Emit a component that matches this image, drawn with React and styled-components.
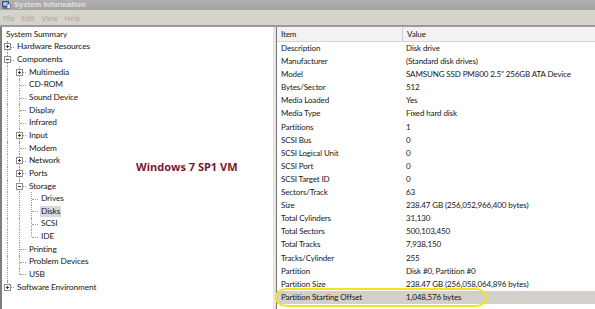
import React from 'react';
import styled, { createGlobalStyle } from 'styled-components';

const GlobalStyle = createGlobalStyle`
  html, body {
    margin: 0;
    padding: 0;
    background: #ffffff;
    overflow: hidden;
  }
  body {
    font-family: Lato, "Open Sans", "DejaVu Sans", sans-serif;
  }
`;

const tree = [
  { label: 'System Summary', depth: -1 },
  { label: 'Hardware Resources', depth: 0, box: '+' },
  { label: 'Components', depth: 0, box: '-' },
  { label: 'Multimedia', depth: 1, box: '+' },
  { label: 'CD-ROM', depth: 1 },
  { label: 'Sound Device', depth: 1 },
  { label: 'Display', depth: 1 },
  { label: 'Infrared', depth: 1 },
  { label: 'Input', depth: 1, box: '+' },
  { label: 'Modem', depth: 1 },
  { label: 'Network', depth: 1, box: '+' },
  { label: 'Ports', depth: 1, box: '+' },
  { label: 'Storage', depth: 1, box: '-' },
  { label: 'Drives', depth: 2 },
  { label: 'Disks', depth: 2, selected: true },
  { label: 'SCSI', depth: 2 },
  { label: 'IDE', depth: 2 },
  { label: 'Printing', depth: 1 },
  { label: 'Problem Devices', depth: 1 },
  { label: 'USB', depth: 1 },
  { label: 'Software Environment', depth: 0, box: '+' },
];

const details = [
  ['Description', 'Disk drive'],
  ['Manufacturer', '(Standard disk drives)'],
  ['Model', 'SAMSUNG SSD PM800 2.5" 256GB ATA Device'],
  ['Bytes/Sector', '512'],
  ['Media Loaded', 'Yes'],
  ['Media Type', 'Fixed hard disk'],
  ['Partitions', '1'],
  ['SCSI Bus', '0'],
  ['SCSI Logical Unit', '0'],
  ['SCSI Port', '0'],
  ['SCSI Target ID', '0'],
  ['Sectors/Track', '63'],
  ['Size', '238.47 GB (256,052,966,400 bytes)'],
  ['Total Cylinders', '31,130'],
  ['Total Sectors', '500,103,450'],
  ['Total Tracks', '7,938,150'],
  ['Tracks/Cylinder', '255'],
  ['Partition', 'Disk #0, Partition #0'],
  ['Partition Size', '238.47 GB (256,058,064,896 bytes)'],
  ['Partition Starting Offset', '1,048,576 bytes'],
];

// true when a later row sits at the same depth before the tree climbs above it
const hasNextSibling = (i) => {
  const d = tree[i].depth;
  for (let j = i + 1; j < tree.length; j++) {
    if (tree[j].depth < d) return false;
    if (tree[j].depth === d) return true;
  }
  return false;
};

const ancestorAt = (i, level) => {
  for (let j = i - 1; j >= 0; j--) {
    if (tree[j].depth === level) return j;
  }
  return -1;
};

const Window = styled.div`
  width: 595px;
  height: 309px;
  display: flex;
  flex-direction: column;
  background: #d4d0c8;
  overflow: hidden;
`;

const TitleBar = styled.div`
  height: 10px;
  flex-shrink: 0;
  display: flex;
  align-items: center;
  gap: 3px;
  padding-left: 2px;
  background: linear-gradient(#b0b0b0, #a4a4a4);
`;

const TitleText = styled.span`
  font-family: "Liberation Sans", Arial, sans-serif;
  font-weight: bold;
  font-size: 7.4px;
  color: #e0e0e0;
  letter-spacing: 0.15px;
  line-height: 10px;
`;

const MenuBar = styled.div`
  height: 15px;
  flex-shrink: 0;
  display: flex;
  align-items: center;
  gap: 7px;
  padding-left: 3px;
  background: #d6d3cc;
`;

const MenuItem = styled.span`
  font-family: "Open Sans", sans-serif;
  font-size: 7.3px;
  color: #a6a49f;
`;

const Client = styled.div`
  flex: 1;
  display: flex;
  border-top: 2px solid #9c9a96;
  min-height: 0;
`;

const TreePane = styled.div`
  width: 271px;
  flex-shrink: 0;
  background: #ffffff;
  border-left: 2px solid #7e7e7e;
  position: relative;
  padding-top: 1px;
  font-size: 8.3px;
  letter-spacing: -0.1px;
  color: #161616;
`;

const TreeRow = styled.div`
  height: 12.65px;
  display: flex;
  align-items: stretch;
  padding-left: ${p => (p.$root ? '3px' : '0')};
`;

const Gutter = styled.div`
  width: 12px;
  flex-shrink: 0;
  position: relative;

  &::before {
    content: "";
    display: ${p => (p.$vert ? 'block' : 'none')};
    position: absolute;
    left: 5px;
    top: 0;
    height: ${p => (p.$vert === 'half' ? '50%' : '100%')};
    border-left: 1px dotted #9a9a9a;
  }

  &::after {
    content: "";
    display: ${p => (p.$stub ? 'block' : 'none')};
    position: absolute;
    left: 6px;
    right: 0;
    top: 50%;
    border-top: 1px dotted #9a9a9a;
  }
`;

const ExpandBox = styled.span`
  position: absolute;
  left: 2px;
  top: 50%;
  margin-top: -3.5px;
  width: 7px;
  height: 7px;
  box-sizing: border-box;
  border: 1px solid #8e8e8e;
  background: #ffffff;
  z-index: 1;

  &::before {
    content: "";
    position: absolute;
    left: 1px;
    right: 1px;
    top: 2px;
    height: 1px;
    background: #3a3a3a;
  }

  &::after {
    content: "";
    display: ${p => (p.$open ? 'none' : 'block')};
    position: absolute;
    top: 1px;
    bottom: 1px;
    left: 2px;
    width: 1px;
    background: #3a3a3a;
  }
`;

const NodeLabel = styled.span`
  align-self: center;
  margin-left: ${p => (p.$root ? '0' : '2px')};
  padding: 0 1px;
  line-height: 11px;
  white-space: nowrap;
  background: ${p => (p.$selected ? '#d9d9d9' : 'transparent')};
`;

const Watermark = styled.div`
  position: absolute;
  left: 134px;
  top: 132px;
  font-family: "Open Sans", "DejaVu Sans", sans-serif;
  font-weight: bold;
  font-size: 11px;
  letter-spacing: 0;
  color: #7b1533;
  white-space: nowrap;
`;

const Splitter = styled.div`
  width: 3px;
  flex-shrink: 0;
  background: #e8e6e2;
  border-right: 1px solid #767676;
`;

const ListPane = styled.div`
  flex: 1;
  background: #ffffff;
  position: relative;
  font-size: 8px;
  letter-spacing: -0.12px;
  color: #161616;
`;

const Columns = styled.div`
  display: grid;
  grid-template-columns: 126px 1fr;
`;

const HeaderCell = styled.div`
  height: 14px;
  line-height: 14px;
  padding-left: 4px;
  background: #f2f2f2;
  border-bottom: 1px solid #d6d6d6;
  border-right: ${p => (p.$last ? 'none' : '1px solid #cfcfcf')};
  white-space: nowrap;
`;

const Cell = styled.div`
  height: 13.1px;
  line-height: 13.1px;
  padding-left: ${p => (p.$value ? '3px' : '4px')};
  white-space: nowrap;
  background: ${p => (p.$selected ? '#d3d0ca' : 'transparent')};
`;

const Marker = styled.div`
  position: absolute;
  left: -2px;
  top: 261px;
  width: 212px;
  height: 19px;
  box-sizing: border-box;
  border: 2.5px solid #f3e41e;
  border-radius: 12px / 10px;
  pointer-events: none;
`;

const AppIcon = () => (
  <svg width="9" height="8" viewBox="0 0 9 8">
    <rect x="0.5" y="0.5" width="6" height="5" fill="#6f8fc8" stroke="#2d4f8e" />
    <rect x="1.5" y="1.5" width="4" height="3" fill="#bcd2f2" />
    <rect x="5" y="3" width="3.5" height="4.5" fill="#e6e6e6" stroke="#5a5a5a" strokeWidth="0.6" />
    <rect x="1" y="6.4" width="4" height="1.2" fill="#4a4a4a" />
  </svg>
);

const TreeNode = ({ node, index }) => {
  if (node.depth < 0) {
    return (
      <TreeRow $root>
        <NodeLabel $root>{node.label}</NodeLabel>
      </TreeRow>
    );
  }
  const gutters = [];
  for (let k = 0; k < node.depth; k++) {
    const anc = ancestorAt(index, k);
    gutters.push(<Gutter key={k} $vert={anc >= 0 && hasNextSibling(anc) ? 'full' : null} />);
  }
  gutters.push(
    <Gutter key="own" $vert={hasNextSibling(index) ? 'full' : 'half'} $stub>
      {node.box && <ExpandBox $open={node.box === '-'} />}
    </Gutter>
  );
  return (
    <TreeRow>
      {gutters}
      <NodeLabel $selected={node.selected}>{node.label}</NodeLabel>
    </TreeRow>
  );
};

export default function App() {
  const lastRow = details.length - 1;
  return (
    <>
      <GlobalStyle />
      <Window>
        <TitleBar>
          <AppIcon />
          <TitleText>System Information</TitleText>
        </TitleBar>
        <MenuBar>
          <MenuItem>File</MenuItem>
          <MenuItem>Edit</MenuItem>
          <MenuItem>View</MenuItem>
          <MenuItem>Help</MenuItem>
        </MenuBar>
        <Client>
          <TreePane>
            {tree.map((node, i) => (
              <TreeNode key={node.label} node={node} index={i} />
            ))}
            <Watermark>Windows 7 SP1 VM</Watermark>
          </TreePane>
          <Splitter />
          <ListPane>
            <Columns>
              <HeaderCell>Item</HeaderCell>
              <HeaderCell $last>Value</HeaderCell>
              {details.map(([item, value], i) => (
                <React.Fragment key={item}>
                  <Cell $selected={i === lastRow}>{item}</Cell>
                  <Cell $value $selected={i === lastRow}>{value}</Cell>
                </React.Fragment>
              ))}
            </Columns>
            <Marker />
          </ListPane>
        </Client>
      </Window>
    </>
  );
}
